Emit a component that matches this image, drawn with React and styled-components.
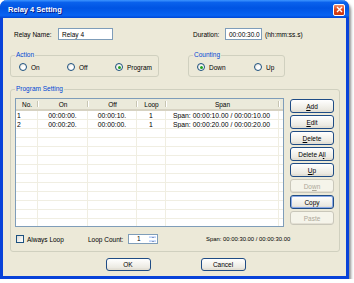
import React from "react";
import styled, { createGlobalStyle } from "styled-components";

const GlobalStyle = createGlobalStyle`
  html, body {
    margin: 0;
    padding: 0;
    background: #ffffff;
  }
  body {
    font-family: "Liberation Sans", Arial, sans-serif;
    font-size: 6.5px;
    color: #000;
  }
`;

const FONT = `"Liberation Sans", Arial, sans-serif`;

const Window = styled.div`
  width: 349px;
  height: 279px;
  box-sizing: border-box;
  border: 3px solid #0842d9;
  border-top: 0;
  border-radius: 7px 7px 0 0;
  background: #ece9d8;
  box-shadow: 2px 3px 3px rgba(0, 0, 0, 0.45);
  display: flex;
  flex-direction: column;
`;

const TitleBar = styled.div`
  height: 18px;
  margin: 0 -3px;
  padding: 0 4px 0 8px;
  display: flex;
  align-items: center;
  justify-content: space-between;
  border-radius: 7px 7px 0 0;
  background: linear-gradient(
    to bottom,
    #3d95ff 0%,
    #0a61ec 14%,
    #0054e3 45%,
    #0863f2 85%,
    #0047d6 100%
  );
`;

const Title = styled.span`
  font-family: ${FONT};
  font-weight: bold;
  font-size: 7.5px;
  color: #fff;
  text-shadow: 1px 1px 0 #0a1883;
`;

const CloseBtn = styled.div`
  width: 12px;
  height: 12px;
  box-sizing: border-box;
  border: 1px solid #fff;
  border-radius: 2px;
  background: linear-gradient(to bottom, #f08d6c, #e0491f 45%, #c9360e);
  display: flex;
  align-items: center;
  justify-content: center;
  margin-top: 1px;
`;

const Body = styled.div`
  flex: 1;
  display: flex;
  flex-direction: column;
  padding: 10px 0 0 7px;
`;

const TopRow = styled.div`
  display: flex;
  align-items: center;
  height: 12px;
  padding-left: 4px;
`;

const Label = styled.span`
  width: ${(p) => (p.$w ? `${p.$w}px` : "auto")};
  flex: none;
  white-space: nowrap;
  margin-left: ${(p) => p.$ml || 0}px;
`;

const TextBox = styled.div`
  width: ${(p) => p.$w}px;
  height: 12px;
  box-sizing: border-box;
  border: 1px solid #7f9db9;
  background: #fff;
  padding-left: 3px;
  display: flex;
  align-items: center;
  flex: none;
`;

const GroupRow = styled.div`
  display: flex;
  margin-top: 15px;
  gap: 29px;
`;

const Group = styled.div`
  position: relative;
  width: ${(p) => p.$w}px;
  height: ${(p) => p.$h}px;
  box-sizing: border-box;
  border: 1px solid #d0d0bf;
  border-radius: 3px;
`;

const Legend = styled.span`
  position: absolute;
  top: -5px;
  left: 4px;
  padding: 0 1px;
  line-height: 8px;
  background: #ece9d8;
  color: #0046d5;
`;

const RadioRow = styled.div`
  display: flex;
  align-items: center;
  height: 100%;
  padding: 2px 0 0 8px;
  box-sizing: border-box;
`;

const Option = styled.label`
  width: ${(p) => p.$w}px;
  display: flex;
  align-items: center;
  gap: 4px;
  flex: none;
`;

const RadioDot = styled.span`
  width: 8px;
  height: 8px;
  box-sizing: border-box;
  border-radius: 50%;
  border: 1px solid #1c5180;
  background: radial-gradient(circle at 65% 65%, #fff 30%, #dcd7cb 100%);
  display: flex;
  align-items: center;
  justify-content: center;
  &::after {
    content: "";
    width: 3px;
    height: 3px;
    border-radius: 50%;
    background: ${(p) => (p.$on ? "#21a121" : "transparent")};
  }
`;

const ProgramGroup = styled(Group)`
  margin-top: 12px;
  padding: 8px 5px 0 4px;
  display: flex;
  flex-direction: column;
`;

const ProgramMain = styled.div`
  display: flex;
  gap: 6px;
`;

const ListBox = styled.div`
  width: 269px;
  height: 129px;
  box-sizing: border-box;
  border: 1px solid #7f9db9;
  background: #fff;
  overflow: hidden;
`;

const COLS = "22px 50px 49px 29px 113px 1fr";

const HeaderRow = styled.div`
  display: grid;
  grid-template-columns: ${COLS};
  height: 12px;
  box-sizing: border-box;
  background: #ebeadb;
  border-bottom: 2px solid #d6d2c2;
`;

const HeadCell = styled.div`
  position: relative;
  display: flex;
  align-items: center;
  justify-content: ${(p) => (p.$left ? "flex-start" : "center")};
  padding-left: ${(p) => (p.$left ? 6 : 0)}px;
  &::after {
    content: "";
    position: absolute;
    right: 0;
    top: 2px;
    bottom: 2px;
    width: 1px;
    background: #c7c5b2;
    box-shadow: 1px 0 0 #fff;
    display: ${(p) => (p.$last ? "none" : "block")};
  }
`;

const Row = styled.div`
  display: grid;
  grid-template-columns: ${COLS};
  height: 9px;
  box-sizing: border-box;
  border-bottom: 1px solid #f0eee2;
  font-size: 6.8px;
`;

const Cell = styled.div`
  display: flex;
  align-items: center;
  white-space: nowrap;
  overflow: hidden;
  justify-content: ${(p) => (p.$left ? "flex-start" : "center")};
  padding-left: ${(p) => p.$pl || 0}px;
  border-right: ${(p) => (p.$last ? "none" : "1px solid #f0eee2")};
`;

const ButtonCol = styled.div`
  display: flex;
  flex-direction: column;
  gap: 2px;
  margin-top: 1px;
`;

const Btn = styled.button`
  width: ${(p) => p.$w}px;
  height: ${(p) => p.$h}px;
  box-sizing: border-box;
  padding: 0;
  font-family: ${FONT};
  font-size: 6.5px;
  color: ${(p) => (p.disabled ? "#aca899" : "#000")};
  border: 1px solid ${(p) => (p.disabled ? "#c9c7ba" : "#1f4c85")};
  border-radius: 3px;
  background: ${(p) =>
    p.disabled
      ? "#f5f4ea"
      : "linear-gradient(to bottom, #ffffff, #f4f3ee 45%, #ebe9e1 80%, #d8d3c8)"};
  box-shadow: ${(p) =>
    p.$focus ? "inset 0 0 0 1px #8aa9e6" : "inset 0 -1px 0 #e3dfd3"};
  u {
    text-decoration: underline;
  }
`;

const Footer = styled.div`
  display: flex;
  align-items: center;
  height: 10px;
  margin-top: 7px;
  padding-left: 1px;
`;

const CheckCell = styled.div`
  width: 72px;
  display: flex;
  align-items: center;
  gap: 3px;
  flex: none;
`;

const CheckBox = styled.span`
  width: 8px;
  height: 8px;
  box-sizing: border-box;
  border: 1px solid #1c5180;
  background: linear-gradient(135deg, #dcdcd7, #fff);
`;

const CountCell = styled.div`
  width: 118px;
  display: flex;
  align-items: center;
  flex: none;
`;

const SpinBox = styled.div`
  width: 30px;
  height: 10px;
  box-sizing: border-box;
  border: 1px solid #7f9db9;
  background: #fff;
  display: flex;
  margin-left: 5px;
`;

const SpinValue = styled.span`
  flex: 1;
  text-align: center;
  line-height: 8px;
`;

const SpinArrows = styled.div`
  width: 9px;
  display: flex;
  flex-direction: column;
`;

const SpinHalf = styled.div`
  flex: 1;
  background: linear-gradient(to bottom, #d9e5fd, #b6cdf9);
  border: 1px solid #fff;
  display: flex;
  align-items: center;
  justify-content: center;
  &::after {
    content: "";
    border-left: 1.5px solid transparent;
    border-right: 1.5px solid transparent;
    ${(p) =>
      p.$up
        ? "border-bottom: 1.5px solid #4d6185;"
        : "border-top: 1.5px solid #4d6185;"}
  }
`;

const SpanText = styled.span`
  font-size: 5.9px;
  white-space: nowrap;
`;

const DialogButtons = styled.div`
  display: flex;
  justify-content: center;
  gap: 50px;
  margin-top: 6px;
  padding-right: 5px;
`;

const Radio = ({ w, on, children }) => (
  <Option $w={w}>
    <RadioDot $on={on} />
    {children}
  </Option>
);

const rows = [
  ["1", "00:00:00.", "00:00:10.", "1", "Span: 00:00:10.00 / 00:00:10.00"],
  ["2", "00:00:20.", "00:00:00.", "1", "Span: 00:00:20.00 / 00:00:20.00"],
];

const App = () => {
  const filled = [...rows];
  while (filled.length < 13) filled.push(["", "", "", "", ""]);

  return (
    <>
      <GlobalStyle />
      <Window>
        <TitleBar>
          <Title>Relay 4 Setting</Title>
          <CloseBtn>
            <svg width="7" height="7" viewBox="0 0 7 7">
              <path d="M1 1 L6 6 M6 1 L1 6" stroke="#fff" strokeWidth="1.4" />
            </svg>
          </CloseBtn>
        </TitleBar>
        <Body>
          <TopRow>
            <Label $w={44}>Relay Name:</Label>
            <TextBox $w={55}>Relay 4</TextBox>
            <Label $w={32} $ml={80}>
              Duration:
            </Label>
            <TextBox $w={37}>00:00:30.0</TextBox>
            <Label $ml={3}>(hh:mm:ss.s)</Label>
          </TopRow>

          <GroupRow>
            <Group $w={149} $h={22}>
              <Legend>Action</Legend>
              <RadioRow>
                <Radio w={48}>On</Radio>
                <Radio w={48}>Off</Radio>
                <Radio w={48} on>
                  Program
                </Radio>
              </RadioRow>
            </Group>
            <Group $w={97} $h={22}>
              <Legend>Counting</Legend>
              <RadioRow>
                <Radio w={57} on>
                  Down
                </Radio>
                <Radio w={30}>Up</Radio>
              </RadioRow>
            </Group>
          </GroupRow>

          <ProgramGroup $w={330} $h={163}>
            <Legend>Program Setting</Legend>
            <ProgramMain>
              <ListBox>
                <HeaderRow>
                  <HeadCell $left>No.</HeadCell>
                  <HeadCell>On</HeadCell>
                  <HeadCell>Off</HeadCell>
                  <HeadCell>Loop</HeadCell>
                  <HeadCell>Span</HeadCell>
                  <HeadCell $last />
                </HeaderRow>
                {filled.map((r, i) => (
                  <Row key={i}>
                    <Cell $left $pl={1}>
                      {r[0]}
                    </Cell>
                    <Cell>{r[1]}</Cell>
                    <Cell>{r[2]}</Cell>
                    <Cell>{r[3]}</Cell>
                    <Cell $left $pl={7}>
                      {r[4]}
                    </Cell>
                    <Cell $last />
                  </Row>
                ))}
              </ListBox>
              <ButtonCol>
                <Btn $w={44} $h={14}>
                  <u>A</u>dd
                </Btn>
                <Btn $w={44} $h={14}>
                  <u>E</u>dit
                </Btn>
                <Btn $w={44} $h={14}>
                  <u>D</u>elete
                </Btn>
                <Btn $w={44} $h={14}>
                  Delete A<u>l</u>l
                </Btn>
                <Btn $w={44} $h={14}>
                  <u>U</u>p
                </Btn>
                <Btn $w={44} $h={14} disabled>
                  Do<u>w</u>n
                </Btn>
                <Btn $w={44} $h={14} $focus>
                  Copy
                </Btn>
                <Btn $w={44} $h={14} disabled>
                  Paste
                </Btn>
              </ButtonCol>
            </ProgramMain>
            <Footer>
              <CheckCell>
                <CheckBox />
                <span>Always Loop</span>
              </CheckCell>
              <CountCell>
                <span>Loop Count:</span>
                <SpinBox>
                  <SpinValue>1</SpinValue>
                  <SpinArrows>
                    <SpinHalf $up />
                    <SpinHalf />
                  </SpinArrows>
                </SpinBox>
              </CountCell>
              <SpanText>Span: 00:00:30.00 / 00:00:30.00</SpanText>
            </Footer>
          </ProgramGroup>

          <DialogButtons>
            <Btn $w={45} $h={13}>
              OK
            </Btn>
            <Btn $w={45} $h={13}>
              Cancel
            </Btn>
          </DialogButtons>
        </Body>
      </Window>
    </>
  );
};

export default App;
